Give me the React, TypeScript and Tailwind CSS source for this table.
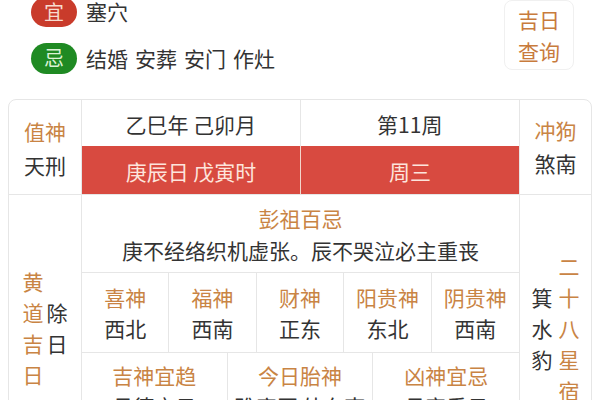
const FONT = { fontFamily: '"Noto Sans CJK SC", "Noto Sans", sans-serif' };

const gods = [
  { label: "喜神", value: "西北" },
  { label: "福神", value: "西南" },
  { label: "财神", value: "正东" },
  { label: "阳贵神", value: "东北" },
  { label: "阴贵神", value: "西南" },
];

const bottom = [
  { label: "吉神宜趋", value: "月德宝日" },
  { label: "今日胎神", value: "碓磨厕 外东南" },
  { label: "凶神宜忌", value: "月害重日" },
];

function VerticalText({ text, className }: { text: string; className: string }) {
  return (
    <div className={`flex flex-col leading-[31px] ${className}`}>
      {text.split("").map((c, i) => (
        <span key={i}>{c}</span>
      ))}
    </div>
  );
}

export default function App() {
  return (
    <div className="h-[400px] w-[600px] overflow-hidden bg-white text-[21px] text-[#333]" style={FONT}>
      {/* 宜忌 + 吉日查询 */}
      <div className="flex h-[99px] justify-between pl-[31px] pr-[26px]">
        <div className="-mt-[4px] flex flex-col gap-[15px]">
          <div className="flex items-center gap-[9px]">
            <span className="flex h-[30px] w-[46px] items-center justify-center rounded-full bg-[#c93b2b] text-[20px] text-[#f7dccf]">
              宜
            </span>
            <span>塞穴</span>
          </div>
          <div className="flex items-center gap-[9px]">
            <span className="flex h-[31px] w-[46px] items-center justify-center rounded-full bg-[#1f8a23] text-[20px] text-[#dcf2d6]">
              忌
            </span>
            <span className="flex gap-[7px]">
              <span>结婚</span>
              <span>安葬</span>
              <span>安门</span>
              <span>作灶</span>
            </span>
          </div>
        </div>
        <div className="flex h-[70px] w-[70px] flex-col items-center justify-center rounded-lg border border-[#f0f0f0] leading-[32px] text-[#c87b3d]">
          <span>吉日</span>
          <span>查询</span>
        </div>
      </div>

      {/* 黄历表 */}
      <div className="mx-2 grid grid-cols-[73px_438px_1fr] grid-rows-[95px_266px] overflow-hidden rounded-lg border border-[#e6e6e6]">
        <div className="flex flex-col items-center justify-center border-r border-b border-[#e6e6e6] pt-[2px] leading-[34px]">
          <span className="text-[#c98444]">值神</span>
          <span>天刑</span>
        </div>

        <div className="flex flex-col border-r border-b border-[#e6e6e6]">
          <div className="grid h-[46px] grid-cols-2 text-center">
            <div className="flex items-center justify-center border-r border-[#e6e6e6] pt-[3px]">乙巳年 己卯月</div>
            <div className="flex items-center justify-center pt-[3px]">第11周</div>
          </div>
          <div className="grid h-[48px] grid-cols-2 gap-px bg-[#f3d6cc] text-center text-[#fde4dc]">
            <div className="flex items-center justify-center bg-[#d84a40] pt-[3px]">庚辰日 戊寅时</div>
            <div className="flex items-center justify-center bg-[#d84a40] pt-[3px]">周三</div>
          </div>
        </div>

        <div className="flex flex-col items-center justify-center border-b border-[#e6e6e6] leading-[33px]">
          <span className="text-[#c98444]">冲狗</span>
          <span>煞南</span>
        </div>

        <div className="flex items-start justify-center gap-[3px] border-r border-[#e6e6e6] pt-[71px]">
          <VerticalText text="黄道吉日" className="text-[#c98444]" />
          <VerticalText text="除日" className="pt-[31px]" />
        </div>

        <div className="flex flex-col border-r border-[#e6e6e6]">
          <div className="flex h-[78px] flex-col items-center justify-center border-b border-[#e6e6e6] leading-[32px]">
            <span className="text-[#c98444]">彭祖百忌</span>
            <span>庚不经络织机虚张。辰不哭泣必主重丧</span>
          </div>
          <div className="grid h-[80px] grid-cols-5 border-b border-[#e6e6e6]">
            {gods.map((g, i) => (
              <div
                key={g.label}
                className={`flex flex-col items-center justify-center leading-[31px] ${
                  i < gods.length - 1 ? "border-r border-[#e6e6e6]" : ""
                }`}
              >
                <span className="text-[#c98444]">{g.label}</span>
                <span>{g.value}</span>
              </div>
            ))}
          </div>
          <div className="grid flex-1 grid-cols-3">
            {bottom.map((b, i) => (
              <div
                key={b.label}
                className={`flex flex-col items-center pt-[7px] leading-[31px] ${
                  i < bottom.length - 1 ? "border-r border-[#e6e6e6]" : ""
                }`}
              >
                <span className="text-[#c98444]">{b.label}</span>
                <span>{b.value}</span>
              </div>
            ))}
          </div>
        </div>

        <div className="flex items-start justify-center gap-[6px] pt-[56px]">
          <VerticalText text="箕水豹" className="pt-[31px]" />
          <VerticalText text="二十八星宿" className="text-[#c98444]" />
        </div>
      </div>
    </div>
  );
}
